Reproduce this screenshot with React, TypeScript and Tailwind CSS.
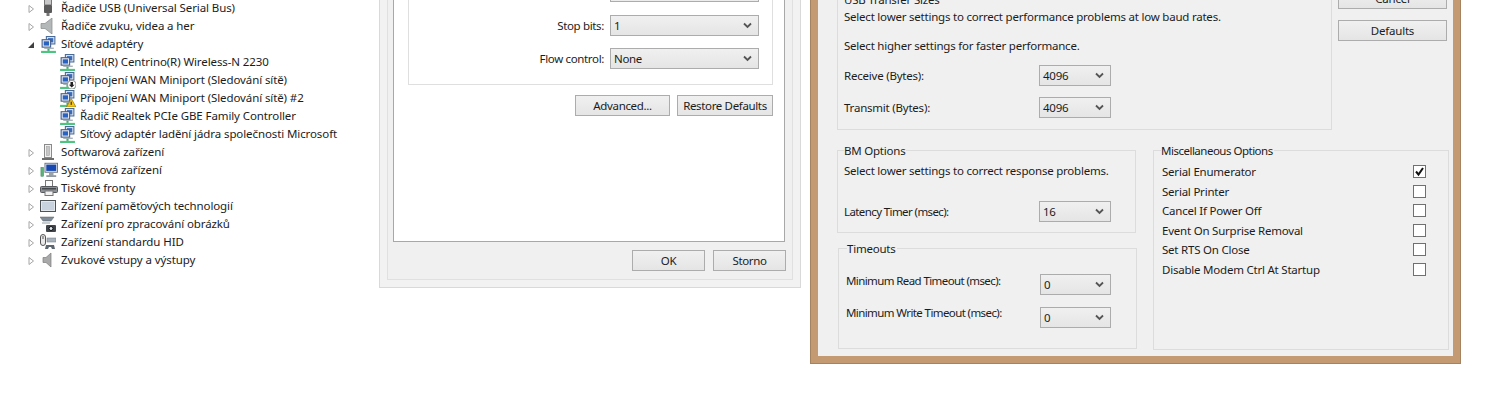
import React from 'react'

const FONT = "font-['Noto_Sans',sans-serif]"

/* Device manager icons, 16x16 */
const NetworkIcon: React.FC<{ badge?: 'down' | 'warn' }> = ({ badge }) => (
  <svg width="17" height="17" viewBox="0 0 16 16">
    <rect x="6" y="0.5" width="8" height="7" fill="#dfe7f2" stroke="#4a6a97" />
    <rect x="7.5" y="2" width="5" height="4" fill="#3a6cbc" />
    <rect x="2" y="3.5" width="8" height="7" fill="#e8edf5" stroke="#3d5a88" />
    <rect x="3.500" y="5" width="5" height="4" fill="#2a62c0" />
    <rect x="4" y="11" width="9" height="1" fill="#8f99a6" />
    <rect x="7" y="12" width="2" height="2" fill="#3fae6a" />
    <rect x="1" y="14" width="14" height="2" fill="#4cc581" />
    {badge === 'down' && (
      <g>
        <circle cx="12" cy="12" r="4" fill="#fff" stroke="#999" />
        <path d="M10.8 9.500h2.400v2.400h1.500L12 14.600l-2.700-2.700h1.500z" fill="#222" />
      </g>
    )}
    {badge === 'warn' && <path d="M11.500 8 16 16H7z" fill="#f5c518" stroke="#8a6d00" strokeWidth="0.6" />}
    {badge === 'warn' && <rect x="11" y="11" width="1" height="3" fill="#222" />}
  </svg>
)

const UsbIcon = () => (
  <svg width="16" height="16" viewBox="0 0 16 16">
    <rect x="4.500" y="-3" width="7" height="8" fill="#c8c8c8" stroke="#777" />
    <rect x="4" y="5" width="8" height="8" rx="1" fill="#5b5b5b" />
    <rect x="6.500" y="13" width="3" height="3" fill="#777" />
  </svg>
)

const SpeakerIcon: React.FC<{ narrow?: boolean }> = ({ narrow }) => (
  <svg width="16" height="16" viewBox="0 0 16 16">
    {narrow ? (
      <path d="M3 5.500h3L11 1v14l-5-4.500H3z" fill="#a9a9a9" stroke="#7c7c7c" strokeWidth="0.7" />
    ) : (
      <path d="M1 5.500h4L12 0v16l-7-5.500H1z" fill="#b4b8b8" stroke="#858a8a" strokeWidth="0.7" />
    )}
  </svg>
)

const SoftwareIcon = () => (
  <svg width="16" height="16" viewBox="0 0 16 16">
    <rect x="4.500" y="0.500" width="7" height="13" fill="#f1f1f1" stroke="#8a8a8a" />
    <rect x="6.500" y="2.500" width="3" height="9" fill="#c6c6c6" stroke="#9a9a9a" strokeWidth="0.5" />
    <rect x="2" y="14" width="12" height="2" fill="#6e6e6e" />
  </svg>
)

const SystemIcon = () => (
  <svg width="18" height="16" viewBox="0 0 20 16">
    <rect x="5.500" y="0.500" width="14" height="10" fill="#dfe4ea" stroke="#66707c" />
    <rect x="7" y="2" width="11" height="7" fill="#1747b0" />
    <rect x="10" y="11" width="5" height="3" fill="#9aa2aa" />
    <rect x="7" y="14" width="11" height="1.500" fill="#6f7780" />
    <rect x="1" y="5" width="3" height="10" fill="#5bb27a" stroke="#3f7f58" strokeWidth="0.5" />
  </svg>
)

const PrinterIcon = () => (
  <svg width="18" height="16" viewBox="0 0 18 16">
    <rect x="5.500" y="0.500" width="7" height="6" fill="#fafafa" stroke="#777" />
    <rect x="0.500" y="6.500" width="17" height="6" rx="1" fill="#8d9196" stroke="#55585c" />
    <rect x="2" y="8" width="14" height="1.500" fill="#44474b" />
    <rect x="5" y="11" width="8" height="4.500" fill="#f2f2f2" stroke="#777" />
  </svg>
)

const MemoryIcon = () => (
  <svg width="16" height="16" viewBox="0 0 16 16">
    <rect x="0.500" y="2.500" width="15" height="11" fill="#e3e8ed" stroke="#4e5358" />
    <rect x="2" y="4" width="12" height="8" fill="#c7d2de" />
  </svg>
)

const ImagingIcon = () => (
  <svg width="16" height="16" viewBox="0 0 16 16">
    <path d="M0 1h14l-3 4H3z" fill="#7f8b96" stroke="#59626a" strokeWidth="0.5" />
    <rect x="2" y="6" width="8" height="2" fill="#c9ced3" />
    <rect x="6" y="9" width="10" height="7" rx="1" fill="#3f454b" />
    <circle cx="11" cy="12.500" r="2" fill="#dfe6ec" stroke="#111" />
  </svg>
)

const HidIcon = () => (
  <svg width="16" height="16" viewBox="0 0 16 16">
    <rect x="0.500" y="0.500" width="5" height="11" rx="2.500" fill="#e9e9e9" stroke="#555" />
    <rect x="2.500" y="2" width="1" height="3" fill="#555" />
    <rect x="7" y="4" width="9" height="4" fill="#a7b2bd" stroke="#6e7a85" strokeWidth="0.5" />
    <path d="M6 11h8l1 4h-3l-1-2H9l-1 2H5z" fill="#5b6670" />
  </svg>
)

const TreeArrow: React.FC<{ open?: boolean }> = ({ open }) => (
  <svg width="10" height="10" viewBox="0 0 10 10" className="mt-0.5">
    {open ? (
      <path d="M8 2v6H2z" fill="#404040" />
    ) : (
      <path d="M3 1.500 7.500 5 3 8.500z" fill="#fff" stroke="#a6a6a6" />
    )}
  </svg>
)

type TreeRow = { label: string; icon: React.ReactNode; open?: boolean; child?: boolean }

const rows: TreeRow[] = [
  { label: 'Řadiče USB (Universal Serial Bus)', icon: <UsbIcon /> },
  { label: 'Řadiče zvuku, videa a her', icon: <SpeakerIcon /> },
  { label: 'Síťové adaptéry', icon: <NetworkIcon />, open: true },
  { label: 'Intel(R) Centrino(R) Wireless-N 2230', icon: <NetworkIcon />, child: true },
  { label: 'Připojení WAN Miniport (Sledování sítě)', icon: <NetworkIcon badge="down" />, child: true },
  { label: 'Připojení WAN Miniport (Sledování sítě) #2', icon: <NetworkIcon badge="warn" />, child: true },
  { label: 'Řadič Realtek PCIe GBE Family Controller', icon: <NetworkIcon />, child: true },
  { label: 'Síťový adaptér ladění jádra společnosti Microsoft', icon: <NetworkIcon />, child: true },
  { label: 'Softwarová zařízení', icon: <SoftwareIcon /> },
  { label: 'Systémová zařízení', icon: <SystemIcon /> },
  { label: 'Tiskové fronty', icon: <PrinterIcon /> },
  { label: 'Zařízení paměťových technologií', icon: <MemoryIcon /> },
  { label: 'Zařízení pro zpracování obrázků', icon: <ImagingIcon /> },
  { label: 'Zařízení standardu HID', icon: <HidIcon /> },
  { label: 'Zvukové vstupy a výstupy', icon: <SpeakerIcon narrow /> },
]

const Chevron = () => (
  <svg width="9" height="7" viewBox="0 0 9 7">
    <path d="M1 1.500 4.500 5 8 1.500" fill="none" stroke="#555" strokeWidth="1.800" />
  </svg>
)

const Select: React.FC<{ value: string; className: string }> = ({ value, className }) => (
  <div
    className={`flex items-center justify-between h-[21px] pl-[3px] pr-[6px] border border-[#acacac] bg-gradient-to-b from-[#f0f0f0] to-[#e5e5e5] ${className}`}
  >
    <span>{value}</span>
    <Chevron />
  </div>
)

const Button: React.FC<{ label: string; className?: string }> = ({ label, className = '' }) => (
  <div
    className={`flex items-center justify-center h-[21px] border border-[#acacac] bg-gradient-to-b from-[#f0f0f0] to-[#e5e5e5] ${className}`}
  >
    {label}
  </div>
)

const Legend: React.FC<{ label: string; className?: string }> = ({ label, className = '' }) => (
  <div className={`-mt-[9px] w-fit h-[18px] pr-px bg-[#f0f0f0] leading-[18px] ${className}`}>{label}</div>
)

const Row: React.FC<{ label: string; children: React.ReactNode; className?: string; labelClass?: string }> = ({
  label,
  children,
  className = '',
  labelClass = '',
}) => (
  <div className={`flex items-center justify-between ${className}`}>
    <span className={labelClass}>{label}</span>
    {children}
  </div>
)

const misc = [
  'Serial Enumerator',
  'Serial Printer',
  'Cancel If Power Off',
  'Event On Surprise Removal',
  'Set RTS On Close',
  'Disable Modem Ctrl At Startup',
]

export default function App() {
  return (
    <div className={`${FONT} flex w-[1495px] h-[400px] overflow-hidden bg-white text-[11.5px] tracking-[-0.1px] text-[#1c1c1c]`}>
      {/* Device tree */}
      <div className="w-[379px] shrink-0 -mt-[1px] pl-[26px]">
        {rows.map(row => (
          <div key={row.label} className={`flex items-center h-[18px] ${row.child ? 'pl-[33px]' : ''}`}>
            {!row.child && (
              <span className="w-[14px] flex">
                <TreeArrow open={row.open} />
              </span>
            )}
            <span className="w-[21px] flex">{row.icon}</span>
            <span className="whitespace-nowrap">{row.label}</span>
          </div>
        ))}
      </div>

      {/* Serial port dialog */}
      <div className="w-[422px] h-[288px] shrink-0 border-x border-b border-[#d9d9d9] bg-[#f2f2f2] px-[7px] pb-[7px] tracking-[-0.35px]">
        <div className="h-full border-x border-b border-[#e0e0e0] bg-[#f0f0f0] pl-[5px] pr-[1px]">
          <div className="w-[392px] h-[242px] border-x border-b border-[#a8a8a8] bg-white pl-[14px] pr-[11px]">
            <div className="w-[365px] h-[85px] border-x border-b border-[#dfdfdf] pr-[13px]">
              <div className="ml-[201px] h-[2px] border-x border-b border-[#acacac] bg-[#ececec]" />
              <div className="flex items-center justify-end gap-[6px] mt-[13px]">
                <span>Stop bits:</span>
                <Select value="1" className="w-[149px]" />
              </div>
              <div className="flex items-center justify-end gap-[6px] mt-[12px]">
                <span>Flow control:</span>
                <Select value="None" className="w-[149px]" />
              </div>
            </div>
            <div className="flex justify-end gap-[7px] mt-[10px] w-[365px]">
              <Button label="Advanced..." className="w-[95px]" />
              <Button label="Restore Defaults" className="w-[96px]" />
            </div>
          </div>
          <div className="flex justify-end gap-[8px] mt-[8px] w-[393px]">
            <Button label="OK" className="w-[73px]" />
            <Button label="Storno" className="w-[73px]" />
          </div>
        </div>
      </div>

      {/* FTDI advanced settings */}
      <div className="ml-[9px] w-[651px] h-[364px] shrink-0 border-x border-b border-[#a58260] tracking-[-0.22px]">
        <div className="h-full border-x-[7px] border-b-[7px] border-[#c49a72] bg-[#f0f0f0] pl-[19px]">
          <div className="flex h-[130px]">
            <div className="w-[495px] border-x border-b border-[#dcdcdc] px-[6px]">
              <div className="-mt-[9px] h-[18px] leading-[18px]">USB Transfer Sizes</div>
              <div className="-mt-[1px] leading-[18px]">Select lower settings to correct performance problems at low baud rates.</div>
              <div className="mt-[11px] leading-[18px]">Select higher settings for faster performance.</div>
              <Row label="Receive (Bytes):" className="mt-[10px] w-[267px]">
                <Select value="4096" className="w-[72px]" />
              </Row>
              <Row label="Transmit (Bytes):" className="mt-[11px] w-[267px]">
                <Select value="4096" className="w-[72px]" />
              </Row>
            </div>
            <div className="ml-[6px] w-[109px] flex flex-col gap-[11px]">
              <Button label="Cancel" className="-mt-[12px]" />
              <Button label="Defaults" />
            </div>
          </div>

          <div className="flex mt-[20px] gap-[16px]">
            <div className="w-[300px]">
              <div className="w-[299px] h-[83px] border border-[#dcdcdc] px-[6px]">
                <Legend label="BM Options" />
                <div className="mt-[2px] leading-[18px]">Select lower settings to correct response problems.</div>
                <Row label="Latency Timer (msec):" className="mt-[21px] w-[267px]" labelClass="tracking-[-0.6px]">
                  <Select value="16" className="w-[72px]" />
                </Row>
              </div>
              <div className="mt-[15px] ml-px w-[299px] h-[101px] border border-[#dcdcdc] px-[7px]">
                <Legend label="Timeouts" className="ml-px" />
                <Row label="Minimum Read Timeout (msec):" className="mt-[16px] w-[265px]" labelClass="-mt-[7px] tracking-[-0.6px]">
                  <Select value="0" className="w-[71px]" />
                </Row>
                <Row label="Minimum Write Timeout (msec):" className="mt-[12px] w-[265px]" labelClass="-mt-[10px] tracking-[-0.6px]">
                  <Select value="0" className="w-[71px]" />
                </Row>
              </div>
            </div>

            <div className="w-[296px] h-[200px] border border-[#dcdcdc] pl-[8px] pr-[22px]">
              <Legend label="Miscellaneous Options" className="-ml-px tracking-[-0.5px]" />
              <div className="mt-[2.7px] flex flex-col gap-[1.5px]">
                {misc.map((item, i) => (
                  <div key={item} className="flex items-center justify-between h-[18px]">
                    <span>{item}</span>
                    <span className="flex items-center justify-center w-[13px] h-[13px] border border-[#707070] bg-white">
                      {i === 0 && (
                        <svg width="11" height="11" viewBox="0 0 11 11">
                          <path d="M2 5.500 4.500 8.500 9 2" fill="none" stroke="#111" strokeWidth="2" />
                        </svg>
                      )}
                    </span>
                  </div>
                ))}
              </div>
            </div>
          </div>
        </div>
      </div>
    </div>
  )
}
